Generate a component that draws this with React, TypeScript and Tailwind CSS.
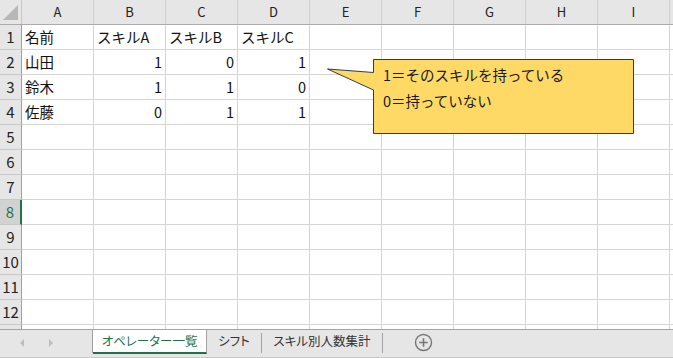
import React from 'react';

const cols = ['A', 'B', 'C', 'D', 'E', 'F', 'G', 'H', 'I', ''];

const data: (string | number)[][] = [
  ['名前', 'スキルA', 'スキルB', 'スキルC'],
  ['山田', 1, 0, 1],
  ['鈴木', 1, 1, 0],
  ['佐藤', 0, 1, 1],
];

const font = "font-['Noto_Sans_CJK_JP',sans-serif]";

function HeaderRow() {
  return (
    <div className="flex h-[25px] shrink-0 border-b border-[#ababab] bg-[#e6e6e6]">
      <div className="relative w-[22px] shrink-0 border-r border-[#c6c6c6]">
        <svg className="absolute left-0 top-0" width="21" height="24">
          <polygon points="3,20 18,20 18,5" fill="#b7b7b7" />
        </svg>
      </div>
      {cols.map((c, i) => (
        <div
          key={i}
          className="flex w-[72px] shrink-0 items-center justify-center border-r border-[#cfcfcf] text-[13px] text-[#222]"
        >
          {c}
        </div>
      ))}
    </div>
  );
}

function Row({ n }: { n: number }) {
  const values = data[n - 1] ?? [];
  const selected = n === 8;
  return (
    <div className="flex h-[25px] shrink-0">
      <div
        className={`flex w-[22px] shrink-0 items-center justify-center border-b border-b-[#c8c8c8] text-[15px] ${
          selected
            ? 'border-r-2 border-r-[#217346] bg-[#d2d2d2] text-[#217346]'
            : 'border-r border-r-[#9f9f9f] bg-[#e6e6e6] text-[#222]'
        }`}
      >
        {n < 13 ? n : ''}
      </div>
      {cols.map((c, i) => {
        const v = values[i];
        const isNum = typeof v === 'number';
        return (
          <div
            key={i}
            className={`flex w-[72px] shrink-0 items-center border-r border-b border-[#d4d4d4] px-[3px] text-[14.5px] text-[#111] ${
              isNum ? 'justify-end' : 'justify-start'
            }`}
          >
            {v !== undefined ? String(v) : ''}
          </div>
        );
      })}
    </div>
  );
}

function Callout() {
  return (
    <>
      <svg className="absolute left-[326px] top-[58px]" width="310" height="77">
        <path
          d="M47.5 1.5 H307.5 V75.5 H47.5 V32 L1.5 11 L47.5 14.5 Z"
          fill="#ffd966"
          stroke="#2f3c4e"
          strokeWidth="1"
        />
      </svg>
      <div className="absolute left-[383px] top-[62px] text-[14.5px] leading-[26px] text-[#1a1a1a]">
        <div>1＝そのスキルを持っている</div>
        <div>0＝持っていない</div>
      </div>
    </>
  );
}

function TabBar() {
  return (
    <div className="flex h-[29px] shrink-0 items-start border-t border-[#a3a3a3] border-b border-b-[#c9c9c9] bg-[#e6e6e6]">
      <div className="relative h-[23px] w-[93px] shrink-0 border-r border-[#9f9f9f]">
        <svg className="absolute left-[19px] top-[9px]" width="6" height="8">
          <polygon points="5,0 5,8 1,4" fill="#bdbdbd" />
        </svg>
        <svg className="absolute left-[48px] top-[9px]" width="6" height="8">
          <polygon points="1,0 1,8 5,4" fill="#bdbdbd" />
        </svg>
      </div>
      <div className="flex h-[24px] w-[114px] shrink-0 items-center justify-center border-r border-r-[#a3a3a3] border-b-2 border-b-[#217346] bg-white pt-[1px] text-[12.5px] text-[#217346] [font-feature-settings:'palt']">
        オペレーター一覧
      </div>
      <div className="flex h-[23px] w-[54px] shrink-0 items-center justify-center text-[12.5px] text-[#333] [font-feature-settings:'palt']">
        シフト
      </div>
      <div className="mt-[3px] h-[20px] w-px shrink-0 bg-[#a3a3a3]" />
      <div className="flex h-[23px] w-[120px] shrink-0 items-center justify-center text-[12.5px] text-[#333] [font-feature-settings:'palt']">
        スキル別人数集計
      </div>
      <div className="mt-[3px] h-[20px] w-px shrink-0 bg-[#a3a3a3]" />
      <div className="ml-[31px] mt-[3px] shrink-0">
        <svg width="19" height="19" viewBox="0 0 19 19">
          <circle cx="9.5" cy="9.5" r="8" fill="none" stroke="#777" strokeWidth="1.4" />
          <path d="M9.5 5.2 V13.8 M5.2 9.5 H13.8" stroke="#777" strokeWidth="1.6" />
        </svg>
      </div>
    </div>
  );
}

export default function App() {
  const rows = Array.from({ length: 13 }, (_, i) => i + 1);
  return (
    <div className={`relative flex h-[358px] w-[673px] flex-col overflow-hidden bg-white ${font}`}>
      <div className="flex h-[329px] shrink-0 flex-col overflow-hidden">
        <HeaderRow />
        {rows.map(n => (
          <Row key={n} n={n} />
        ))}
      </div>
      <TabBar />
      <Callout />
    </div>
  );
}
